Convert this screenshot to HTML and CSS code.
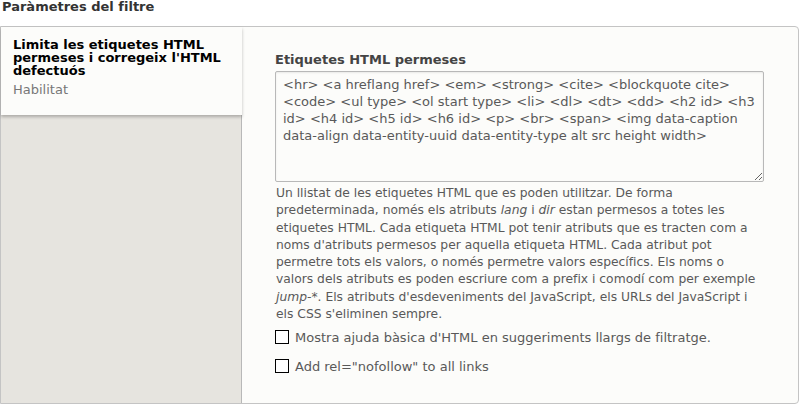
FILE: index.html
```html
<!DOCTYPE html>
<html lang="ca">
<head>
<meta charset="utf-8">
<title>Paràmetres del filtre</title>
<link rel="stylesheet" href="styles.css">
</head>
<body>
<h3 class="title">Paràmetres del filtre</h3>
<div class="vtabs">
  <ul class="menu">
    <li class="tab">
      <strong class="tab-title">Limita les etiquetes HTML permeses i corregeix l'HTML defectuós</strong>
      <span class="tab-summary">Habilitat</span>
    </li>
  </ul>
  <div class="pane">
    <label class="field-label" for="allowed">Etiquetes HTML permeses</label>
    <div class="textarea-wrap">
      <textarea id="allowed" class="textarea">&lt;hr&gt; &lt;a hreflang href&gt; &lt;em&gt; &lt;strong&gt; &lt;cite&gt; &lt;blockquote cite&gt; &lt;code&gt; &lt;ul type&gt; &lt;ol start type&gt; &lt;li&gt; &lt;dl&gt; &lt;dt&gt; &lt;dd&gt; &lt;h2 id&gt; &lt;h3 id&gt; &lt;h4 id&gt; &lt;h5 id&gt; &lt;h6 id&gt; &lt;p&gt; &lt;br&gt; &lt;span&gt; &lt;img data-caption data-align data-entity-uuid data-entity-type alt src height width&gt;</textarea>
    </div>
    <p class="description">Un llistat de les etiquetes HTML que es poden utilitzar. De forma predeterminada, només els atributs <em>lang</em> i <em>dir</em> estan permesos a totes les etiquetes HTML. Cada etiqueta HTML pot tenir atributs que es tracten com a noms d'atributs permesos per aquella etiqueta HTML. Cada atribut pot permetre tots els valors, o només permetre valors específics. Els noms o valors dels atributs es poden escriure com a prefix i comodí com per exemple <em>jump-*</em>. Els atributs d'esdeveniments del JavaScript, els URLs del JavaScript i els CSS s'eliminen sempre.</p>
    <label class="check"><span class="box"></span><span class="check-text">Mostra ajuda bàsica d'HTML en suggeriments llargs de filtratge.</span></label>
    <label class="check"><span class="box"></span><span class="check-text">Add rel="nofollow" to all links</span></label>
  </div>
</div>
</body>
</html>
```
FILE: styles.css
```css
html, body {
  margin: 0;
  padding: 0;
  background: #ffffff;
  font-family: "DejaVu Sans", "Liberation Sans", sans-serif;
  color: #333333;
}

.title {
  margin: 0;
  padding: 0 0 0 2px;
  font-size: 13px;
  line-height: 14px;
  font-weight: bold;
  color: #333333;
  height: 26px;
}

.vtabs {
  display: flex;
  height: 376px;
  margin-right: 1px;
  border: 1px solid #c4c4c4;
  border-radius: 0 4px 4px 0;
  background: #fcfcfa;
}

.menu {
  list-style: none;
  margin: 0;
  padding: 0;
  width: 240px;
  flex: none;
  background: #e6e4df;
  border-right: 1px solid #b8b8b8;
}

.tab {
  display: flex;
  flex-direction: column;
  background: #fcfcfa;
  height: 66px;
  padding: 11px 12px 11px 12px;
  box-shadow: 0 2px 3px rgba(0, 0, 0, 0.25);
  margin-right: -1px;
  position: relative;
}

.tab-title {
  font-size: 13px;
  line-height: 13px;
  font-weight: bold;
  color: #000000;
}

.tab-summary {
  margin-top: 5px;
  font-size: 13px;
  line-height: 16px;
  color: #777777;
}

.pane {
  flex: 1;
  padding: 25px 34px 0 33px;
}

.field-label {
  display: block;
  font-size: 13px;
  line-height: 16px;
  font-weight: bold;
  color: #444444;
  margin-bottom: 3px;
}

.textarea-wrap {
  display: flex;
}

.textarea {
  width: 489px;
  height: 111px;
  box-sizing: border-box;
  margin: 0;
  padding: 4px 7px;
  font-family: "DejaVu Sans", "Liberation Sans", sans-serif;
  font-size: 13px;
  line-height: 17px;
  color: #595959;
  background: #fcfcfa;
  border: 1px solid #b8b8b8;
  border-radius: 2px;
  box-shadow: inset 0 1px 2px rgba(0, 0, 0, 0.08);
  resize: vertical;
}

.description {
  margin: 3px 0 7px 1px;
  font-size: 12.3px;
  line-height: 17.3px;
  color: #595959;
}

.check {
  display: flex;
  align-items: flex-end;
  margin-bottom: 13px;
  font-size: 13px;
  line-height: 16px;
  color: #595959;
}

.box {
  border: 1px solid #000000;
  box-sizing: border-box;
  width: 14px;
  height: 14px;
  background: #ffffff;
  margin-right: 6px;
  margin-bottom: 2px;
  flex: none;
}
```
